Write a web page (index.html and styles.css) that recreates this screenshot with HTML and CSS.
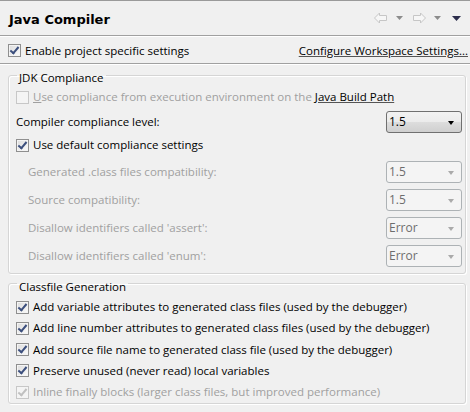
FILE: index.html
```html
<!DOCTYPE html>
<html>
<head>
<meta charset="utf-8">
<link rel="stylesheet" href="styles.css">
</head>
<body>
<div class="page">
  <div class="title-bar">
    <span class="title">Java Compiler</span>
    <div class="nav">
      <svg class="arrow" width="14" height="12" viewBox="0 0 14 12"><path d="M0.5 6 L5.5 1 V3.5 H12.5 V8.5 H5.5 V11 Z" fill="#f6f6f6" stroke="#c6c6c6" stroke-linejoin="round"/></svg>
      <svg class="drop" width="7" height="4" viewBox="0 0 7 4"><path d="M0 0 H7 L3.5 4 Z" fill="#8c8c8c"/></svg>
      <svg class="arrow" width="14" height="12" viewBox="0 0 14 12"><path d="M13.5 6 L8.5 1 V3.5 H1.5 V8.5 H8.5 V11 Z" fill="#f6f6f6" stroke="#c6c6c6" stroke-linejoin="round"/></svg>
      <svg class="drop" width="7" height="4" viewBox="0 0 7 4"><path d="M0 0 H7 L3.5 4 Z" fill="#8c8c8c"/></svg>
      <svg class="menu" width="9" height="5" viewBox="0 0 9 5"><path d="M0 0 H9 L4.5 5 Z" fill="#2c2e4c"/></svg>
    </div>
  </div>
  <div class="enable-row">
    <label class="check"><span class="box on"></span>Enable project specific settings</label>
    <a class="link" href="#">Configure Workspace Settings...</a>
  </div>
  <div class="content">
    <fieldset class="group">
      <legend>JDK Compliance</legend>
      <label class="check disabled row-env"><span class="box"></span><span><u>U</u>se compliance from execution environment on the <a class="link" href="#">Java Build Path</a></span></label>
      <div class="field main">
        <span>Compiler compliance level:</span>
        <div class="combo">1.5</div>
      </div>
      <label class="check row-default"><span class="box on"></span>Use default compliance settings</label>
      <div class="field indent disabled">
        <span>Generated .class files compatibility:</span>
        <div class="combo">1.5</div>
      </div>
      <div class="field indent disabled">
        <span>Source compatibility:</span>
        <div class="combo">1.5</div>
      </div>
      <div class="field indent disabled">
        <span>Disallow identifiers called 'assert':</span>
        <div class="combo">Error</div>
      </div>
      <div class="field indent disabled">
        <span>Disallow identifiers called 'enum':</span>
        <div class="combo">Error</div>
      </div>
    </fieldset>
    <fieldset class="group last">
      <legend>Classfile Generation</legend>
      <div class="checks">
        <label class="check"><span class="box on"></span>Add variable attributes to generated class files (used by the debugger)</label>
        <label class="check"><span class="box on"></span>Add line number attributes to generated class files (used by the debugger)</label>
        <label class="check"><span class="box on"></span>Add source file name to generated class file (used by the debugger)</label>
        <label class="check"><span class="box on"></span>Preserve unused (never read) local variables</label>
        <label class="check disabled"><span class="box on"></span>Inline finally blocks (larger class files, but improved performance)</label>
      </div>
    </fieldset>
  </div>
</div>
</body>
</html>
```

FILE: styles.css
```css
html, body {
  margin: 0;
  padding: 0;
  background: #f0f0f0;
}
body {
  font-family: "Open Sans", "Noto Sans", sans-serif;
  font-size: 11.5px;
  line-height: 14px;
  color: #000;
  width: 470px;
  height: 412px;
  overflow: hidden;
}
.page {
  border-top: 1px solid #9a9a9a;
}
.title-bar {
  box-sizing: border-box;
  height: 35px;
  display: flex;
  align-items: center;
  justify-content: space-between;
  padding: 4px 9px 0 9px;
  border-bottom: 1px solid #a0a0a0;
  box-shadow: 0 1px 0 #fff;
}
.title {
  font-weight: bold;
  font-size: 13px;
  font-family: "DejaVu Sans", sans-serif;
}
.nav {
  display: flex;
  align-items: center;
  margin-top: -4px;
}
.nav .arrow { margin-right: 8px; }
.nav .drop { margin-right: 9px; }
.nav .menu { margin-left: 2px; }
.enable-row {
  box-sizing: border-box;
  height: 28px;
  display: flex;
  align-items: center;
  justify-content: space-between;
  padding: 2px 2px 0 8px;
  border-bottom: 1px solid #a0a0a0;
  box-shadow: 0 1px 0 #fff;
}
.link {
  color: #000;
  text-decoration: underline;
  text-decoration-color: #555;
}
.check {
  display: flex;
  align-items: center;
  gap: 4px;
  white-space: nowrap;
}
.box {
  width: 11px;
  height: 11px;
  border: 1px solid #8f8f8f;
  background: linear-gradient(135deg, #dcdcdc, #fbfbfb);
  box-shadow: inset 0 0 0 1px #f4f4f4;
  flex: none;
  position: relative;
}
.box.on::after {
  content: "";
  position: absolute;
  left: 3px;
  top: 0px;
  width: 3px;
  height: 7px;
  border: solid #3c4f7d;
  border-width: 0 2px 2px 0;
  transform: rotate(40deg);
}
.check.disabled {
  color: #a0a0a0;
}
.check.disabled .box {
  border-color: #c7c7c7;
  background: #f4f4f4;
  box-shadow: none;
}
.check.disabled .box.on::after {
  border-color: #c0c0c0;
}
.check.disabled .link { color: #000; }
.content {
  padding: 1px 4px 0 8px;
}
.group {
  margin: 0;
  padding: 0 3px 3px 7px;
  border: 1px solid #d5d5d5;
  border-radius: 3px;
  box-shadow: inset 1px 1px 0 #fff, 1px 1px 0 #fff;
  min-width: 0;
}
.group.last {
  padding-bottom: 0;
}
.group legend {
  padding: 6px 2px 0 2px;
  margin-left: 1px;
  line-height: 14px;
}
.row-env {
  height: 22px;
  margin-top: 1px;
}
.field {
  display: flex;
  align-items: center;
  justify-content: space-between;
  height: 27.9px;
}
.field.main {
  height: 28px;
}
.row-default {
  height: 18px;
  margin-bottom: 4px;
}
.field.indent {
  padding-left: 12px;
}
.field.disabled {
  color: #a0a0a0;
}
.combo {
  box-sizing: border-box;
  width: 76px;
  height: 22px;
  line-height: 20px;
  padding-left: 2px;
  border: 1px solid #707070;
  border-radius: 3px;
  background: linear-gradient(#f2f2f2, #ebebeb 50%, #dddddd 51%, #cfcfcf);
  font-size: 12px;
  color: #000;
  position: relative;
}
.combo::after {
  content: "";
  position: absolute;
  right: 7px;
  top: 9px;
  border-style: solid;
  border-width: 4px 3.5px 0 3.5px;
  border-color: #000 transparent transparent transparent;
}
.field.disabled .combo {
  border-color: #adb2b5;
  background: #f4f4f4;
  color: #6d6d6d;
}
.field.disabled .combo::after {
  border-top-color: #aaaaaa;
}
.checks {
  display: flex;
  flex-direction: column;
  padding-top: 3px;
}
.checks .check {
  height: 21.25px;
}
```
